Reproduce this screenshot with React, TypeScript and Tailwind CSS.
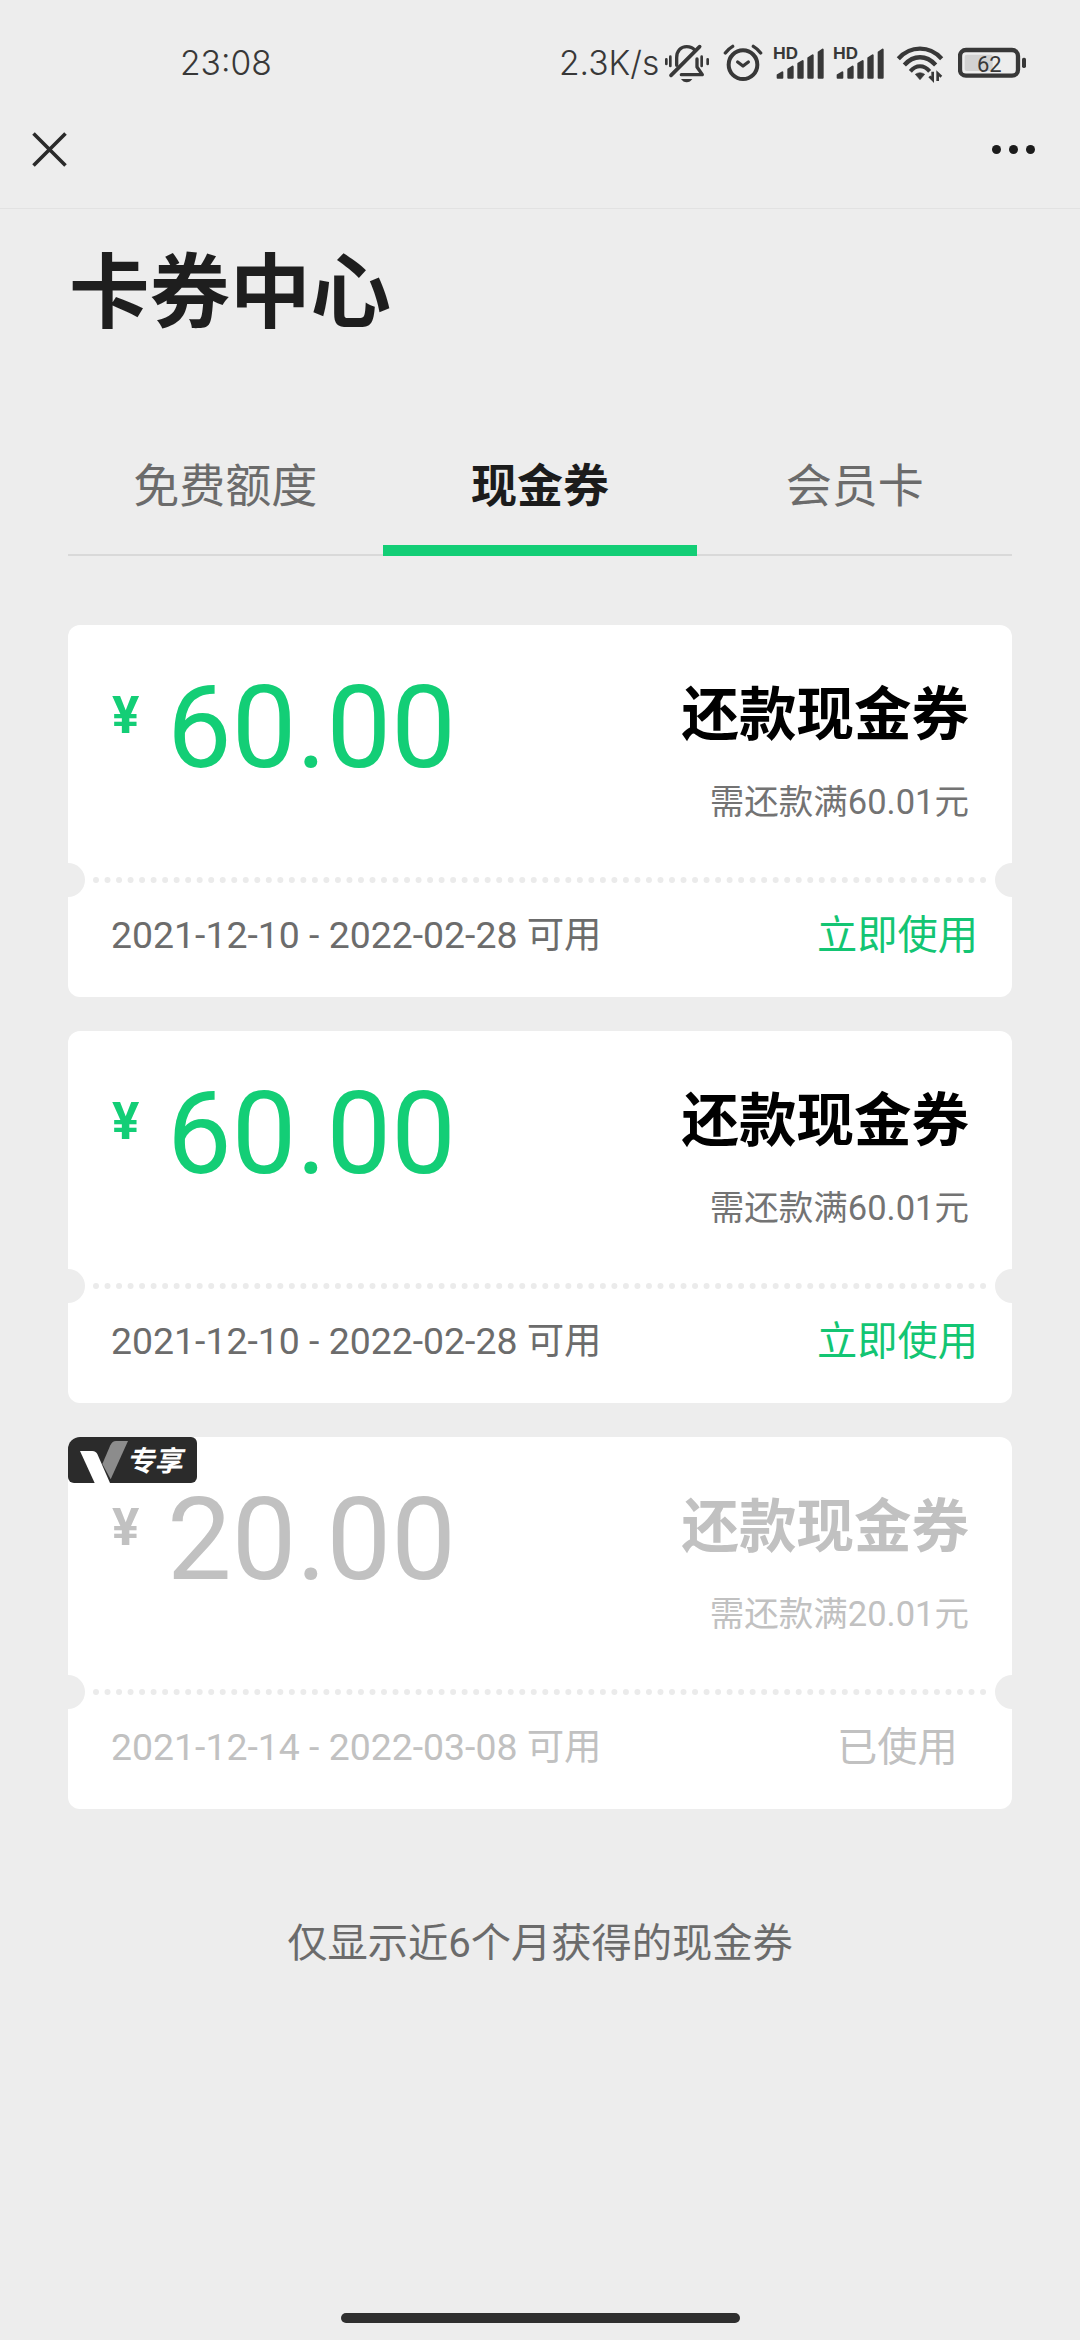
import clsx from "clsx";

type Coupon = {
    id: number;
    amount: string;
    condition: string;
    period: string;
    used?: boolean;
    exclusive?: boolean;
};

const tabs = ["免费额度", "现金券", "会员卡"];

const coupons: Coupon[] = [
    { id: 1, amount: "60.00", condition: "需还款满60.01元", period: "2021-12-10 - 2022-02-28 可用" },
    { id: 2, amount: "60.00", condition: "需还款满60.01元", period: "2021-12-10 - 2022-02-28 可用" },
    { id: 3, amount: "20.00", condition: "需还款满20.01元", period: "2021-12-14 - 2022-03-08 可用", used: true, exclusive: true },
];

function MuteIcon({ className }: { className?: string }) {
    return (
        <svg viewBox="372 36 138 120" className={clsx("h-[40px] w-[46px]", className)} fill="none" stroke="currentColor" strokeLinecap="round" strokeLinejoin="round">
            <path d="M410 103V80C410 60 422 47 440 47C451 47 459 51 464 57" strokeWidth="10" />
            <path d="M471 84V108L487 131H424" strokeWidth="10" />
            <path d="M393 133L479 47" strokeWidth="11" />
            <path d="M423 144H457C453 150 447 154 440 154S427 150 423 144Z" fill="currentColor" stroke="none" />
            <path d="M379 85V99M391 77V105M485 77V105M503 85V99" strokeWidth="8" />
        </svg>
    );
}

function AlarmIcon({ className }: { className?: string }) {
    return (
        <svg viewBox="550 36 120 120" className={clsx("h-[40px] w-[40px]", className)} fill="none" stroke="currentColor" strokeLinecap="round" strokeLinejoin="round">
            <circle cx="610" cy="101" r="43" strokeWidth="12" />
            <path d="M594 93L610 105L626 93" strokeWidth="10" />
            <path d="M557 66C563 58 570 51 579 46M641 46C650 51 657 58 663 66" strokeWidth="10" />
        </svg>
    );
}

function SignalIcon({ className }: { className?: string }) {
    return (
        <svg viewBox="42 36 150 120" className={clsx("h-[40px] w-[50px] overflow-visible", className)} fill="currentColor" stroke="currentColor" strokeWidth="6" strokeLinejoin="round">
            <text x="39" y="83" stroke="none" textLength="75" lengthAdjust="spacingAndGlyphs" className="font-['Inter'] text-[46px] font-bold">HD</text>
            <path d="M53 140V132L67 124V140Z" />
            <path d="M85 140V115L98 107V140Z" />
            <path d="M115 140V98L128 90V140Z" />
            <path d="M145 140V81L158 73V140Z" />
            <path d="M176 140V64L188 56V140Z" />
        </svg>
    );
}

function WifiIcon({ className }: { className?: string }) {
    return (
        <svg viewBox="408 36 144 120" className={clsx("h-[40px] w-[48px]", className)} fill="none" stroke="currentColor">
            <path d="M415 83C452 43 508 43 545 83" strokeWidth="13" />
            <path d="M433 102C461 71 499 71 527 102" strokeWidth="13" />
            <path d="M451 121C468 101 492 101 509 121" strokeWidth="12" />
            <path d="M466 130C475 124 485 124 494 130L480 146Z" fill="currentColor" strokeWidth="2" strokeLinejoin="round" />
            <path d="M518 122V146L508 136M533 150V127L544 137" strokeWidth="8" />
        </svg>
    );
}

function BatteryIcon({ className }: { className?: string }) {
    return (
        <svg viewBox="594 36 204 120" className={clsx("h-[40px] w-[68px]", className)}>
            <rect x="600" y="57" width="174" height="77" rx="18" fill="none" stroke="currentColor" strokeWidth="13" />
            <rect x="614" y="71" width="84" height="49" rx="6" fill="#d2d2d2" />
            <rect x="786" y="80" width="12" height="31" rx="5" fill="currentColor" />
            <text x="688" y="123" textAnchor="middle" fill="currentColor" className="font-['Roboto'] text-[66px] font-normal">62</text>
        </svg>
    );
}

function StatusBar() {
    return (
        <div className="flex h-[92px] items-center pt-[34px] font-['Inter'] text-[33.6px] font-light text-[#383838]">
            <span className="ml-[180px] w-[379px] leading-[40px]">23:08</span>
            <span className="w-[105px] whitespace-nowrap leading-[40px]">2.3K/s</span>
            <MuteIcon />
            <AlarmIcon className="ml-[13px]" />
            <SignalIcon className="ml-[11px]" />
            <SignalIcon className="ml-[10px]" />
            <WifiIcon className="ml-[12px]" />
            <BatteryIcon className="ml-[14px]" />
        </div>
    );
}

function NavBar() {
    return (
        <header className="flex h-[117px] items-center justify-between border-b border-[#e2e2e2] pb-[2px] pl-[32px] pr-[45px]">
            <button aria-label="关闭">
                <svg viewBox="0 0 35 35" className="h-[35px] w-[35px]" stroke="#2a2a2a" strokeWidth="3.6">
                    <path d="M1.5 1.5L33.5 33.5M33.5 1.5L1.5 33.5" />
                </svg>
            </button>
            <button aria-label="更多" className="flex gap-[8px]">
                <span className="size-[9px] rounded-full bg-[#1c1c1c]" />
                <span className="size-[9px] rounded-full bg-[#1c1c1c]" />
                <span className="size-[9px] rounded-full bg-[#1c1c1c]" />
            </button>
        </header>
    );
}

function ExclusiveBadge() {
    return (
        <div className="absolute left-0 top-0 flex h-[46px] w-[129px] items-center rounded-[6px] bg-[#2b2b2b] text-white">
            <svg viewBox="54 51 183 138" className="h-[46px] w-[61px] shrink-0">
                <path d="M157 132L181 76Q187 63 198 63H234L182 178Z" fill="#8c8c8c" />
                <path d="M90 93H127Q138 93 143 104L180 189H134Z" fill="#fff" />
            </svg>
            <span className="-skew-x-12 whitespace-nowrap pt-[4px] text-[28px] font-bold leading-[40px]">专享</span>
        </div>
    );
}

function CouponCard({ coupon }: { coupon: Coupon }) {
    const { amount, condition, period, used, exclusive } = coupon;

    return (
        <li className="relative h-[372px] overflow-hidden rounded-[12px] bg-white">
            {exclusive && <ExclusiveBadge />}

            <div className="flex h-[238px] justify-between pl-[44px] pr-[43px] pt-[45px]">
                <div className={clsx("flex", used ? "text-[#c1c1c1]" : "text-[#13ce76]")}>
                    <span className="mt-[21px] w-[55px] text-[51px] font-bold leading-[50px]">¥</span>
                    <span className="text-[115px] leading-[115px]">{amount}</span>
                </div>
                <div className="flex flex-col items-end pt-[17px]">
                    <h2 className={clsx("text-[57.5px] font-bold leading-[58px]", used ? "text-[#c1c1c1]" : "text-black")}>还款现金券</h2>
                    <p className={clsx("mt-[37px] text-[34.5px] leading-[40px]", used ? "text-[#c1c1c1]" : "text-[#737373]")}>{condition}</p>
                </div>
            </div>

            {/* Tear line */}
            <div className="-mx-[17px] flex h-[34px] items-center justify-between">
                <span className="size-[34px] rounded-full bg-[#ededed]" />
                <svg viewBox="0 0 894 6" className="h-[6px] w-[894px]">
                    <path d="M3 3H891" stroke="#ebebeb" strokeWidth="6" strokeLinecap="round" strokeDasharray="0 11.52" />
                </svg>
                <span className="size-[34px] rounded-full bg-[#ededed]" />
            </div>

            <div className="flex justify-between pl-[43px] pr-[34px] pt-[18px]">
                <span className={clsx("text-[37.4px] leading-[40px]", used ? "text-[#c1c1c1]" : "text-[#6c6c6c]")}>{period}</span>
                <button className={clsx("w-[161px] text-center text-[40.25px] leading-[42px]", used ? "text-[#c1c1c1]" : "text-[#13c573]")}>
                    {used ? "已使用" : "立即使用"}
                </button>
            </div>
        </li>
    );
}

export default function App() {
    return (
        <div className="flex h-[2340px] w-[1080px] flex-col bg-[#ededed] font-['Roboto','Noto_Sans_CJK_SC',sans-serif]">
            <StatusBar />
            <NavBar />

            <main className="px-[68px]">
                <h1 className="ml-[1px] mt-[45px] text-[80.5px] font-bold leading-[80px] text-[#1e1e1e]">卡券中心</h1>

                <nav className="mt-[82px] grid h-[140px] grid-cols-3 border-b-2 border-[#d9d9d9]">
                    {tabs.map((tab, i) => (
                        <button
                            key={tab}
                            className={clsx(
                                "relative pt-[2px] text-[46px] leading-[46px]",
                                i === 1 ? "font-bold text-[#1c1c1c]" : "text-[#6b6b6b]"
                            )}
                        >
                            {tab}
                            {i === 1 && <span className="absolute inset-x-0 -bottom-[2px] h-[11px] bg-[#13ce76]" />}
                        </button>
                    ))}
                </nav>

                <ul className="mt-[69px] flex flex-col gap-[34px]">
                    {coupons.map((coupon) => (
                        <CouponCard key={coupon.id} coupon={coupon} />
                    ))}
                </ul>

                <p className="mt-[115px] text-center text-[40.25px] leading-[40px] text-[#6b6b6b]">仅显示近6个月获得的现金券</p>
            </main>

            <div className="mx-auto mb-[17px] mt-auto h-[10px] w-[399px] rounded-full bg-[#2f2f2f]" />
        </div>
    );
}
